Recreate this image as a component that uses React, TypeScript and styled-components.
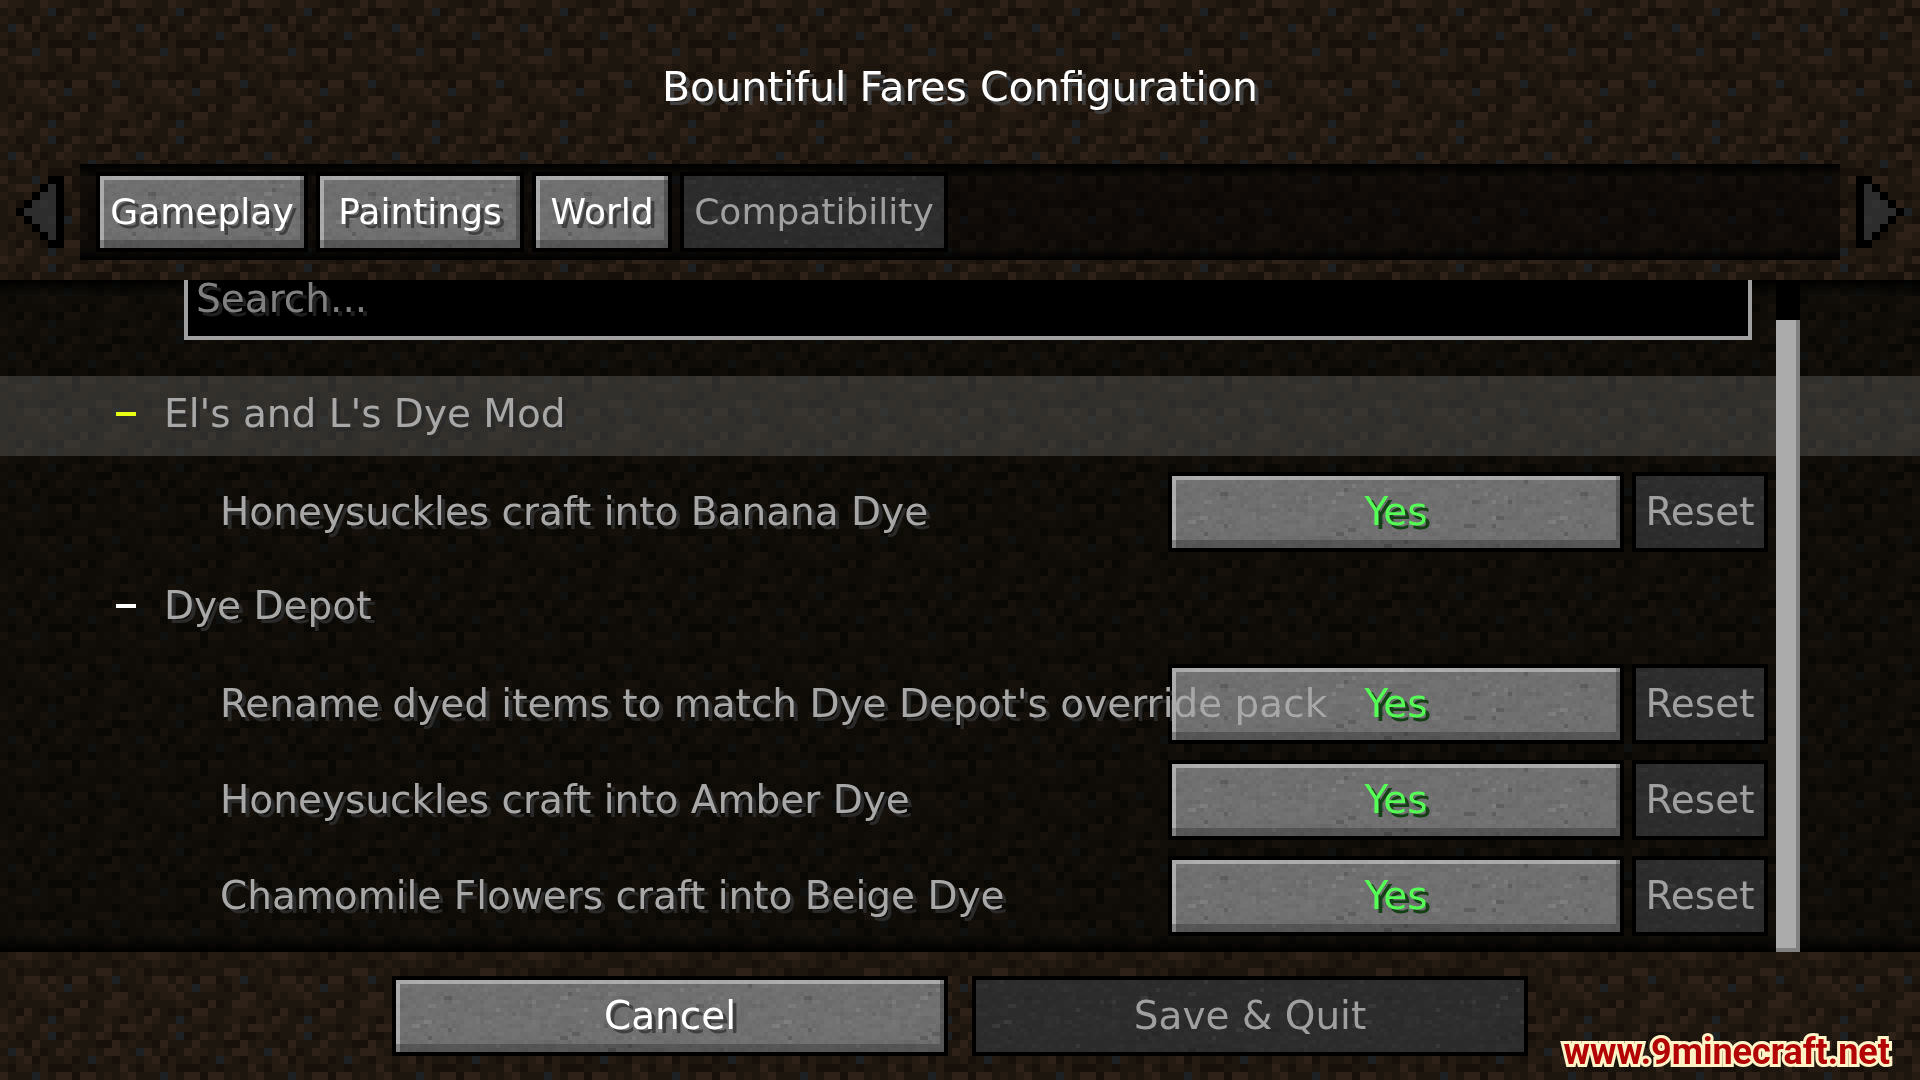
import React, { useState } from "react";
import styled, { createGlobalStyle, css } from "styled-components";

/* ---------- block textures ---------- */

const DIRT_COLORS: Record<string, string> = {
  a: "#160f0a",
  b: "#1d160f",
  c: "#251b12",
  d: "#2e2118",
  e: "#1e2123",
};

const DIRT_ROWS = [
  "dccbbdccbbabbdbd",
  "bcabbceabdcbdcaa",
  "cbbadbbbdbbbaadb",
  "bedbcabdccbcbddc",
  "cbcdacbbcabecbac",
  "baccbcaaabbabbbd",
  "dbbbecbddaddbcbc",
  "bcddccbbcaccbbcc",
  "cbbcbcbabccbbbab",
  "bcabbaabbbbbddbc",
  "bcbddbdcaddabceb",
  "bbcccdbceccbacba",
  "bacbccdbbbbbbbdd",
  "bcbbbbccbadabddc",
  "cbadbabaddbbbccc",
  "cbdcbbebccbbccba",
];

const toUrl = (w: number, h: number, cell: number, body: string) =>
  `url("data:image/svg+xml,${encodeURIComponent(
    `<svg xmlns="http://www.w3.org/2000/svg" width="${w * cell}" height="${h * cell}" viewBox="0 0 ${w} ${h}" shape-rendering="crispEdges">${body}</svg>`
  )}")`;

const dirt = toUrl(
  16,
  16,
  8,
  DIRT_ROWS.map((row, y) =>
    row
      .split("")
      .map((k, x) => `<rect x="${x}" y="${y}" width="1" height="1" fill="${DIRT_COLORS[k]}"/>`)
      .join("")
  ).join("")
);

const makeStone = (strength: number) => {
  let seed = 4177;
  const next = () => {
    seed = (seed * 16807) % 2147483647;
    return seed / 2147483647;
  };
  let body = "";
  for (let y = 0; y < 18; y += 1) {
    for (let x = 0; x < 90; x += 1) {
      const r = next();
      const len = next() > 0.6 ? 2 : 1;
      if (r < 0.3) {
        const o = (r < 0.008 ? 0.16 : 0.02 + r * 0.08) * strength;
        body += `<rect x="${x}" y="${y}" width="${len}" height="1" fill="#000" fill-opacity="${o.toFixed(3)}"/>`;
      } else if (r > 0.7) {
        const o = (r > 0.99 ? 0.08 : (r - 0.65) * 0.09) * strength;
        body += `<rect x="${x}" y="${y}" width="${len}" height="1" fill="#fff" fill-opacity="${o.toFixed(3)}"/>`;
      }
    }
  }
  return toUrl(90, 18, 4, body);
};

const stone = makeStone(1);
const darkStone = makeStone(0.7);

/* ---------- styles ---------- */

const GlobalStyle = createGlobalStyle`
  *, *::before, *::after { box-sizing: border-box; }
  html { background: #000; }
  body { margin: 0; }
  button, input { font: inherit; }
`;

const textShadow = css`
  text-shadow: 4px 4px 0 #3f3f3f;
`;

const Screen = styled.div`
  display: grid;
  grid-template-rows: auto 1fr auto;
  min-height: 100vh;
  background: ${dirt};
  color: #fff;
  font-family: "DejaVu Sans", sans-serif;
  font-size: 39px;
  line-height: 40px;
  white-space: nowrap;
`;

const Header = styled.header`
  padding: 67px 16px 20px;
`;

const Title = styled.h1`
  margin: 0 0 57px;
  font-size: 41px;
  font-weight: 400;
  text-align: center;
  ${textShadow}
`;

const TabBar = styled.nav`
  display: flex;
  align-items: center;
  gap: 16px;
  font-size: 36px;
`;

const TabStrip = styled.div`
  flex: 1;
  display: flex;
  gap: 8px;
  padding: 8px 16px;
  background: linear-gradient(
    #000,
    rgba(0, 0, 0, 0.55) 12px,
    rgba(0, 0, 0, 0.55) calc(100% - 12px),
    #000
  );
`;

const ArrowButton = styled.button`
  display: flex;
  padding: 0;
  border: 0;
  background: none;
`;

const StoneButton = styled.button<{ $width: number; $green?: boolean }>`
  width: ${(p) => p.$width}px;
  height: 80px;
  padding: 0;
  border: 4px solid #000;
  background: #707070 ${stone};
  box-shadow:
    inset -4px -8px 0 rgba(0, 0, 0, 0.24),
    inset 4px 4px 0 rgba(255, 255, 255, 0.41);
  color: ${(p) => (p.$green ? "#55ff55" : "#fff")};
  text-shadow: 4px 4px 0 ${(p) => (p.$green ? "#153f15" : "#3f3f3f")};
  text-align: center;

  &:disabled {
    background: #2c2c2c ${darkStone};
    box-shadow: none;
    color: #a0a0a0;
    text-shadow: none;
  }
`;

const ListPane = styled.main`
  position: relative;
  overflow: hidden;
  background:
    linear-gradient(#000, transparent 16px, transparent calc(100% - 16px), #000),
    linear-gradient(rgba(0, 2, 0, 0.53), rgba(0, 2, 0, 0.53)),
    ${dirt} 0 48px;
`;

const Entries = styled.div`
  display: flex;
  flex-direction: column;
  gap: 16px;
  padding-bottom: 16px;
`;

const SearchRow = styled.label`
  display: flex;
  margin: -24px 168px 20px 184px;
`;

const SearchInput = styled.input`
  flex: 1;
  height: 84px;
  padding: 0 8px;
  border: 4px solid #a0a0a0;
  border-radius: 0;
  outline: 0;
  background: #000;
  color: #e0e0e0;

  &::placeholder {
    color: #808080;
    opacity: 1;
    text-shadow: 4px 4px 0 #202020;
  }
`;

const CategoryRow = styled.button<{ $active?: boolean }>`
  display: flex;
  align-items: center;
  gap: 28px;
  height: 80px;
  padding: 0 0 4px 116px;
  border: 0;
  background: ${(p) => (p.$active ? "rgba(255, 255, 255, 0.15)" : "none")};
  color: #a8a8a8;
  text-align: left;
  text-shadow: 4px 4px 0 #2a2a2a;
`;

const Dash = styled.span<{ $active?: boolean }>`
  width: 20px;
  height: 4px;
  background: ${(p) => (p.$active ? "#e8ff14" : "#fff")};
`;

const SettingRow = styled.div`
  display: grid;
  grid-template-columns: minmax(0, 1fr) auto auto;
  align-items: center;
  gap: 8px;
  padding: 0 152px 0 220px;
`;

/* Long labels run over the buttons; the blend drops their shadow there. */
const SettingLabel = styled.label`
  z-index: 1;
  color: #a8a8a8;
  text-shadow: 4px 4px 0 #2a2a2a;
  mix-blend-mode: lighten;
  pointer-events: none;
`;

const ScrollTrack = styled.div`
  position: absolute;
  z-index: 2;
  top: 0;
  bottom: 0;
  right: 120px;
  width: 24px;
  padding-top: 40px;
  background: #000;
`;

const ScrollThumb = styled.div`
  height: 100%;
  background: #ababab;
  box-shadow: inset -4px -4px 0 #808080;
`;

const Footer = styled.footer`
  display: flex;
  justify-content: center;
  gap: 24px;
  padding: 24px;
`;

const Watermark = styled.a`
  position: absolute;
  right: 30px;
  bottom: 4px;
  color: #b30505;
  font-family: Roboto, "Liberation Sans", sans-serif;
  font-size: 36px;
  font-weight: 700;
  line-height: 48px;
  text-decoration: none;
  -webkit-text-stroke: 6px #fdf3c6;
  paint-order: stroke fill;
`;

/* ---------- pieces ---------- */

const ARROW_OUTLINE = [
  [4, 0], [5, 0], [3, 1], [5, 1], [2, 2], [5, 2], [1, 3], [5, 3], [0, 4],
  [5, 4], [1, 5], [5, 5], [2, 6], [5, 6], [3, 7], [5, 7], [4, 8], [5, 8],
];

const Arrow = ({ flip }: { flip?: boolean }) => (
  <svg width="48" height="72" viewBox="0 0 6 9" shapeRendering="crispEdges" aria-hidden="true">
    <g transform={flip ? "translate(6 0) scale(-1 1)" : undefined}>
      <path d="M4 1H5V8H4V7H3V6H2V5H1V4H2V3H3V2H4Z" fill="#2d2d2d" />
      <path d="M3 3H4V4H3ZM4 5H5V6H4Z" fill="#313131" />
      {ARROW_OUTLINE.map(([x, y]) => (
        <rect key={`${x}-${y}`} x={x} y={y} width="1" height="1" fill="#000" />
      ))}
    </g>
  </svg>
);

const TABS = [
  { name: "Gameplay", width: 212 },
  { name: "Paintings", width: 208 },
  { name: "World", width: 140 },
  { name: "Compatibility", width: 268 },
];

const CATEGORIES = [
  { name: "El's and L's Dye Mod", settings: ["Honeysuckles craft into Banana Dye"] },
  {
    name: "Dye Depot",
    settings: [
      "Rename dyed items to match Dye Depot's override pack",
      "Honeysuckles craft into Amber Dye",
      "Chamomile Flowers craft into Beige Dye",
    ],
  },
];

const Setting = ({ id, name }: { id: string; name: string }) => {
  const [on, setOn] = useState(true);
  return (
    <SettingRow>
      <SettingLabel htmlFor={id}>{name}</SettingLabel>
      <StoneButton id={id} type="button" $width={456} $green={on} onClick={() => setOn(!on)}>
        {on ? "Yes" : "No"}
      </StoneButton>
      <StoneButton type="button" $width={136} disabled={on} onClick={() => setOn(true)}>
        Reset
      </StoneButton>
    </SettingRow>
  );
};

export default function App() {
  return (
    <>
      <GlobalStyle />
      <Screen>
        <Header>
          <Title>Bountiful Fares Configuration</Title>
          <TabBar>
            <ArrowButton type="button" aria-label="Previous tabs" disabled>
              <Arrow />
            </ArrowButton>
            <TabStrip>
              {TABS.map((tab) => (
                <StoneButton
                  key={tab.name}
                  type="button"
                  $width={tab.width}
                  disabled={tab.name === "Compatibility"}
                >
                  {tab.name}
                </StoneButton>
              ))}
            </TabStrip>
            <ArrowButton type="button" aria-label="Next tabs" disabled>
              <Arrow flip />
            </ArrowButton>
          </TabBar>
        </Header>
        <ListPane>
          <Entries>
            <SearchRow>
              <SearchInput type="text" placeholder="Search..." aria-label="Search" />
            </SearchRow>
            {CATEGORIES.map((category, c) => (
              <React.Fragment key={category.name}>
                <CategoryRow type="button" aria-expanded="true" $active={c === 0}>
                  <Dash $active={c === 0} />
                  {category.name}
                </CategoryRow>
                {category.settings.map((name, s) => (
                  <Setting key={name} id={`setting-${c}-${s}`} name={name} />
                ))}
              </React.Fragment>
            ))}
          </Entries>
          <ScrollTrack>
            <ScrollThumb />
          </ScrollTrack>
        </ListPane>
        <Footer>
          <StoneButton type="button" $width={556}>
            Cancel
          </StoneButton>
          <StoneButton type="button" $width={556} disabled>
            Save &amp; Quit
          </StoneButton>
        </Footer>
        <Watermark href="#home">www.9minecraft.net</Watermark>
      </Screen>
    </>
  );
}
